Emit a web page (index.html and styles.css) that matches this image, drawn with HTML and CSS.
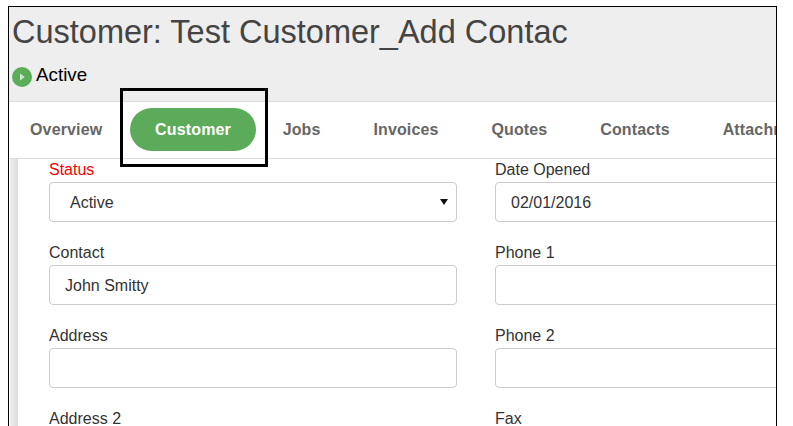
FILE: index.html
```html
<!DOCTYPE html>
<html lang="en">
<head>
<meta charset="utf-8">
<title>Customer</title>
<link rel="stylesheet" href="styles.css">
</head>
<body>
<div class="frame">
  <header class="head">
    <h1 class="title">Customer: Test Customer_Add Contac</h1>
    <div class="state">
      <svg class="state-icon" width="20" height="20" viewBox="0 0 20 20"><circle cx="10" cy="10" r="10" fill="#5cad5a"/><path d="M8 6.5 L12.8 10 L8 13.5Z" fill="#cfe6ce"/></svg>
      <span>Active</span>
    </div>
  </header>
  <nav class="tabs">
    <a class="tab">Overview</a>
    <a class="tab active">Customer</a>
    <a class="tab">Jobs</a>
    <a class="tab">Invoices</a>
    <a class="tab">Quotes</a>
    <a class="tab">Contacts</a>
    <a class="tab">Attachments</a>
  </nav>
  <div class="callout"></div>
  <main class="body">
    <form class="form">
      <div class="field"><label class="req">Status</label><div class="control select">Active<span class="caret"></span></div></div>
      <div class="field"><label>Date Opened</label><div class="control">02/01/2016</div></div>
      <div class="field"><label>Contact</label><div class="control">John Smitty</div></div>
      <div class="field"><label>Phone 1</label><div class="control"></div></div>
      <div class="field"><label>Address</label><div class="control"></div></div>
      <div class="field"><label>Phone 2</label><div class="control"></div></div>
      <div class="field"><label>Address 2</label><div class="control"></div></div>
      <div class="field"><label>Fax</label><div class="control"></div></div>
    </form>
  </main>
</div>
</body>
</html>
```
FILE: styles.css
```css
* { box-sizing: border-box; }
html, body { margin: 0; height: 100%; overflow: hidden; background: #fff; }
body { font-family: "Liberation Sans", Arial, sans-serif; padding: 6px 0 0 8px; }
.frame {
  position: relative;
  width: 769px;
  height: 500px;
  border: 1px solid #000;
  overflow: hidden;
  background: #fff;
}
.head {
  height: 95px;
  background: #eee;
  border-bottom: 1px solid #ddd;
  padding: 5px 0 0 3px;
}
.title {
  margin: 0;
  font-size: 32.5px;
  line-height: 40px;
  font-weight: 400;
  color: #444;
  white-space: nowrap;
}
.state { display: flex; align-items: center; gap: 4px; margin-top: 11px; font-size: 18.8px; line-height: 24px; color: #000; }
.state-icon { margin-top: 3px; }
.tabs {
  display: flex;
  align-items: center;
  height: 57px;
  padding-left: 21px;
  border-bottom: 1px solid #ddd;
  white-space: nowrap;
}
.tab {
  font-size: 16px;
  letter-spacing: 0.15px;
  font-weight: 700;
  color: #666;
  padding: 0 26.4px;
  height: 43px;
  line-height: 43px;
  margin-bottom: 1px;
}
.tab:first-child { padding: 0 27.5px 0 0; }
.tab.active {
  background: #5cab5a;
  color: #fff;
  border-radius: 22px;
  padding: 0 25.25px;
}
.callout {
  position: absolute;
  left: 111px;
  top: 81px;
  width: 148px;
  height: 79px;
  border: 3px solid #000;
}
.body {
  padding-left: 40px;
  background: linear-gradient(to right, #eeeeee, #dddddd) no-repeat 1px 0 / 8px 100%;
}
.form {
  display: grid;
  grid-template-columns: 408px 408px;
  column-gap: 38px;
}
.field { height: 83px; padding-top: 1px; }
label { display: block; font-size: 16px; line-height: 20px; color: #333; margin-bottom: 2px; }
label.req { color: #f00; }
.control {
  position: relative;
  height: 40px;
  line-height: 39px;
  padding: 0 15px;
  font-size: 16px;
  color: #333;
  border: 1px solid #ccc;
  border-radius: 4px;
  background: #fff;
}
.select { padding-left: 20px; }
.caret {
  position: absolute;
  right: 8px;
  top: 16px;
  border-left: 4px solid transparent;
  border-right: 4px solid transparent;
  border-top: 6px solid #111;
}
```
